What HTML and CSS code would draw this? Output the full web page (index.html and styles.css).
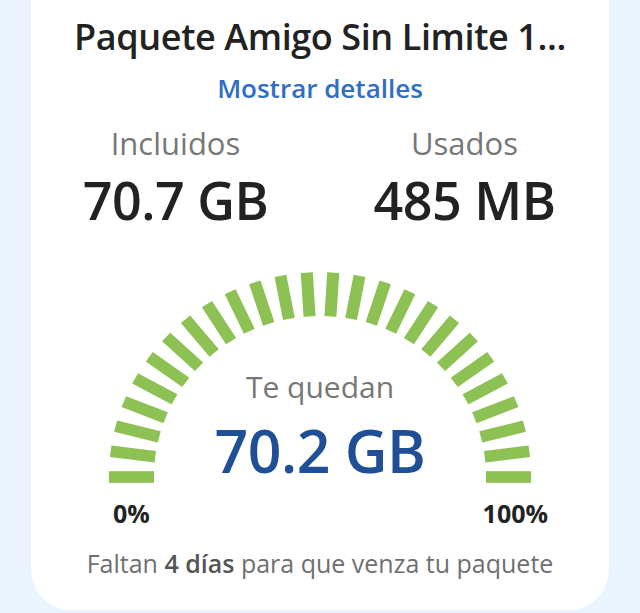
FILE: index.html
```html
<!DOCTYPE html>
<html lang="es">
<head>
    <meta charset="UTF-8">
    <meta name="viewport" content="width=device-width, initial-scale=1.0">
    <title>Paquete Amigo</title>
    <link rel="stylesheet" href="styles.css">
</head>
<body>
<div id="card">
    <h1 class="title">Paquete Amigo Sin Limite 1...</h1>
    <a class="details" href="#">Mostrar detalles</a>

    <div class="stats">
        <div class="stat">
            <span class="label">Incluidos</span>
            <span class="value">70.7 GB</span>
        </div>
        <div class="stat">
            <span class="label">Usados</span>
            <span class="value">485 MB</span>
        </div>
    </div>

    <div class="gauge">
        <svg class="gauge-bars" viewBox="0 0 578 232" width="578" height="232">
            <defs>
                <rect id="bar" x="-211" y="-6" width="45" height="12"/>
            </defs>
            <!-- 26 bars, 7.2deg apart -->
            <g transform="translate(289 210) scale(1 0.97)" fill="#8dc153">
                <use href="#bar" transform="rotate(0)"/>
                <use href="#bar" transform="rotate(7.2)"/>
                <use href="#bar" transform="rotate(14.4)"/>
                <use href="#bar" transform="rotate(21.6)"/>
                <use href="#bar" transform="rotate(28.8)"/>
                <use href="#bar" transform="rotate(36)"/>
                <use href="#bar" transform="rotate(43.2)"/>
                <use href="#bar" transform="rotate(50.4)"/>
                <use href="#bar" transform="rotate(57.6)"/>
                <use href="#bar" transform="rotate(64.8)"/>
                <use href="#bar" transform="rotate(72)"/>
                <use href="#bar" transform="rotate(79.2)"/>
                <use href="#bar" transform="rotate(86.4)"/>
                <use href="#bar" transform="rotate(93.6)"/>
                <use href="#bar" transform="rotate(100.8)"/>
                <use href="#bar" transform="rotate(108)"/>
                <use href="#bar" transform="rotate(115.2)"/>
                <use href="#bar" transform="rotate(122.4)"/>
                <use href="#bar" transform="rotate(129.6)"/>
                <use href="#bar" transform="rotate(136.8)"/>
                <use href="#bar" transform="rotate(144)"/>
                <use href="#bar" transform="rotate(151.2)"/>
                <use href="#bar" transform="rotate(158.4)"/>
                <use href="#bar" transform="rotate(165.6)"/>
                <use href="#bar" transform="rotate(172.8)"/>
                <use href="#bar" transform="rotate(180)"/>
            </g>
        </svg>
        <div class="remaining">
            <span class="remaining-label">Te quedan</span>
            <span class="remaining-value">70.2 GB</span>
        </div>
    </div>

    <div class="scale">
        <span>0%</span>
        <span>100%</span>
    </div>

    <p class="expires">Faltan <b>4 días</b> para que venza tu paquete</p>
</div>
</body>
</html>
```

FILE: styles.css
```css
body {
    font-family: 'Open Sans', sans-serif;
    background-color: #eaf3fe;
    margin: 0;
    padding: 0;
}

#card {
    width: 578px;
    height: 610px;
    margin: 0 auto;
    box-sizing: border-box;
    background-color: #fff;
    border-radius: 0 0 40px 40px;
    display: flex;
    flex-direction: column;
    align-items: center;
    padding-top: 14px;
}

.title {
    margin: 0;
    font-size: 36px;
    font-weight: 600;
    line-height: 46px;
    letter-spacing: -0.4px;
    color: #222;
    white-space: nowrap;
}

.details {
    margin-top: 11px;
    font-size: 26px;
    font-weight: 600;
    line-height: 34px;
    color: #2f6ec3;
    text-decoration: none;
}

.stats {
    width: 100%;
    display: grid;
    grid-template-columns: 1fr 1fr;
    margin-top: 18px;
}

.stat {
    display: flex;
    flex-direction: column;
    align-items: center;
    gap: 5px;
}

.label {
    font-size: 31px;
    line-height: 40px;
    color: #777;
}

.value {
    font-size: 52px;
    font-weight: 600;
    line-height: 64px;
    letter-spacing: -0.5px;
    color: #222;
}

.gauge {
    width: 100%;
    display: grid;
    margin-top: 35px;
}

.gauge-bars, .remaining {
    grid-area: 1 / 1;
}

.gauge-bars {
    display: block;
}

.remaining {
    align-self: start;
    display: flex;
    flex-direction: column;
    align-items: center;
    padding-top: 100px;
}

.remaining-label {
    font-size: 30px;
    line-height: 40px;
    color: #777;
}

.remaining-value {
    margin-top: 8px;
    font-size: 59px;
    font-weight: 600;
    line-height: 70px;
    letter-spacing: -0.5px;
    color: #1f4f97;
}

.scale {
    width: 100%;
    box-sizing: border-box;
    display: flex;
    justify-content: space-between;
    padding: 0 61px 0 82px;
    margin-top: -1px;
    font-size: 25px;
    font-weight: 700;
    line-height: 30px;
    color: #222;
}

.expires {
    margin: 18px 0 0;
    font-size: 25px;
    line-height: 34px;
    color: #6f6f6f;
}

.expires b {
    font-weight: 600;
    color: #555;
}
```
